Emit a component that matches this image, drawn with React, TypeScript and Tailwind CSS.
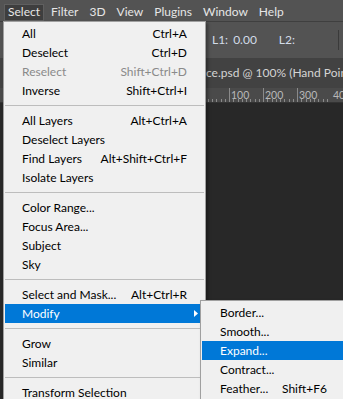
import { ReactNode } from 'react'

const font = { fontFamily: '"Segoe UI", Lato, "Noto Sans", sans-serif' }

type Item =
  | { sep: true }
  | { label: string; shortcut?: string; disabled?: boolean; active?: boolean; arrow?: boolean }

const selectMenu: Item[] = [
  { label: 'All', shortcut: 'Ctrl+A' },
  { label: 'Deselect', shortcut: 'Ctrl+D' },
  { label: 'Reselect', shortcut: 'Shift+Ctrl+D', disabled: true },
  { label: 'Inverse', shortcut: 'Shift+Ctrl+I' },
  { sep: true },
  { label: 'All Layers', shortcut: 'Alt+Ctrl+A' },
  { label: 'Deselect Layers' },
  { label: 'Find Layers', shortcut: 'Alt+Shift+Ctrl+F' },
  { label: 'Isolate Layers' },
  { sep: true },
  { label: 'Color Range...' },
  { label: 'Focus Area...' },
  { label: 'Subject' },
  { label: 'Sky' },
  { sep: true },
  { label: 'Select and Mask...', shortcut: 'Alt+Ctrl+R' },
  { label: 'Modify', active: true, arrow: true },
  { sep: true },
  { label: 'Grow' },
  { label: 'Similar' },
  { sep: true },
  { label: 'Transform Selection' },
]

const modifyMenu = [
  { label: 'Border...' },
  { label: 'Smooth...' },
  { label: 'Expand...', active: true },
  { label: 'Contract...' },
  { label: 'Feather...', shortcut: 'Shift+F6' },
]

function MenuRow({ label, shortcut, disabled, active, arrow }: { label: string; shortcut?: string; disabled?: boolean; active?: boolean; arrow?: boolean }) {
  const color = active ? 'text-white' : disabled ? 'text-[#8a8a8a]' : 'text-[#000000]'
  return (
    <div className={`mx-[1px] h-[19px] flex items-center pl-[17px] pr-[17px] ${active ? 'bg-[#0078d7]' : ''} ${color}`}>
      <span className="whitespace-nowrap">{label}</span>
      {shortcut && <span className="ml-auto whitespace-nowrap">{shortcut}</span>}
      {arrow && (
        <svg className="ml-auto -mr-[11px]" width="4" height="7" viewBox="0 0 4 7">
          <path d="M0 0 L4 3.5 L0 7 Z" fill="#ffffff" />
        </svg>
      )}
    </div>
  )
}

function Separator() {
  return (
    <div className="h-[11px] flex items-center mx-[1px]">
      <div className="h-px w-full bg-[#bdbdbd]" />
    </div>
  )
}

function MenuBarItem({ children, open }: { children: ReactNode; open?: boolean }) {
  return (
    <div
      className={`h-[17px] flex items-center px-[3px] border ${
        open ? 'bg-[#3e3e3e] border-[#5f5f5f]' : 'border-transparent'
      }`}
    >
      {children}
    </div>
  )
}

export default function App() {
  const ticks = Array.from({ length: 40 }, (_, i) => i)
  return (
    <div className="relative w-[343px] h-[399px] overflow-hidden bg-[#282828] text-[12px]" style={font}>
      {/* menu bar */}
      <div className="h-[21px] bg-[#535353] flex items-center pl-[4px] gap-[3px] text-[#e6e6e6] pt-[3px]">
        <MenuBarItem open>Select</MenuBarItem>
        <MenuBarItem>Filter</MenuBarItem>
        <MenuBarItem>3D</MenuBarItem>
        <MenuBarItem>View</MenuBarItem>
        <MenuBarItem>Plugins</MenuBarItem>
        <MenuBarItem>Window</MenuBarItem>
        <MenuBarItem>Help</MenuBarItem>
      </div>

      {/* options bar */}
      <div className="h-[37px] bg-[#535353] border-t border-[#3f3f3f] flex items-center text-[#d2dce8]">
        <span className="ml-[212px]">L1:</span>
        <span className="ml-[5px]">0.00</span>
        <span className="ml-[22px]">L2:</span>
        <div className="ml-auto mr-[4px] w-px h-[20px] bg-[#3a3a3a]" />
      </div>

      {/* document tab */}
      <div className="h-[30px] bg-[#424242] flex items-center">
        <span className="ml-[206px] whitespace-nowrap text-[#d4d4d4]">ce.psd @ 100% (Hand Pointer, RGB/8)</span>
      </div>

      {/* ruler */}
      <div className="relative h-[15px] bg-[#4a4a4a] border-b border-[#333333] overflow-hidden">
        {ticks.map((i) => (
          <div
            key={i}
            className={`absolute bottom-0 w-px bg-[#8a8a8a] ${i % 8 === 0 ? 'h-[15px]' : 'h-[3px]'}`}
            style={{ left: 161 + i * 4.25 }}
          />
        ))}
        {['0', '100', '200', '300', '400'].map((n, i) => (
          <span
            key={n}
            className="absolute top-[1px] text-[10.5px] leading-[12px] text-[#b8b8b8]"
            style={{ left: 197 + i * 34 }}
          >
            {n}
          </span>
        ))}
      </div>

      {/* Select dropdown */}
      <div className="absolute left-[3px] top-[21px] w-[203px] bg-[#f0f0f0] border border-[#a0a0a0] pt-[2px] shadow-[2px_2px_3px_rgba(0,0,0,0.35)]">
        {selectMenu.map((it, i) =>
          'sep' in it ? <Separator key={i} /> : <MenuRow key={i} {...it} />
        )}
      </div>

      {/* Modify submenu */}
      <div className="absolute left-[200px] top-[300px] w-[152px] bg-[#f0f0f0] border border-[#a0a0a0] pt-[2px] pb-[3px] shadow-[2px_2px_3px_rgba(0,0,0,0.35)]">
        {modifyMenu.map((it) => (
          <div
            key={it.label}
            className={`mx-[1px] h-[19px] flex items-center pl-[18px] ${
              it.active ? 'bg-[#0078d7] text-white' : 'text-black'
            }`}
          >
            <span className="w-[62px] whitespace-nowrap">{it.label}</span>
            {it.shortcut && <span className="whitespace-nowrap">{it.shortcut}</span>}
          </div>
        ))}
      </div>
    </div>
  )
}
